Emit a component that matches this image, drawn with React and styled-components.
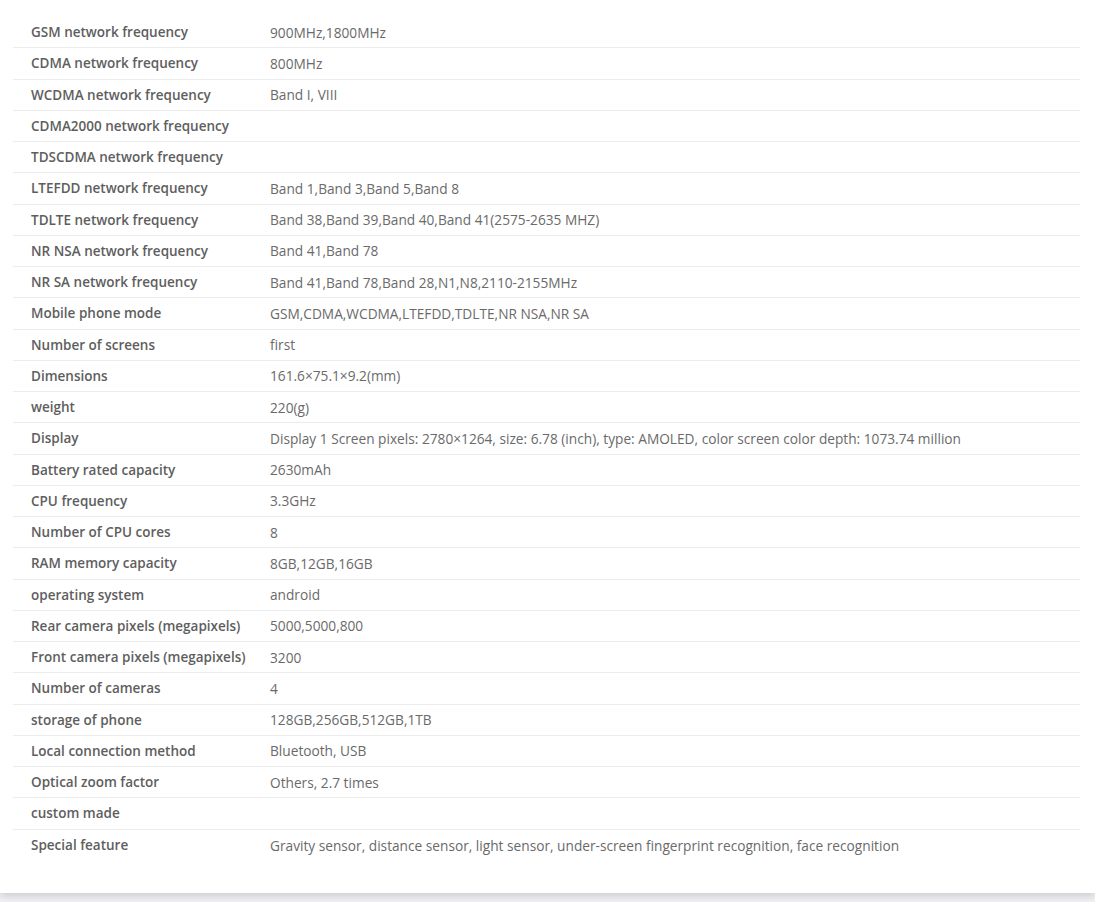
import React from 'react';
import styled, { createGlobalStyle } from 'styled-components';

const specs = [
  ['GSM network frequency', '900MHz,1800MHz'],
  ['CDMA network frequency', '800MHz'],
  ['WCDMA network frequency', 'Band I, VIII'],
  ['CDMA2000 network frequency', ''],
  ['TDSCDMA network frequency', ''],
  ['LTEFDD network frequency', 'Band 1,Band 3,Band 5,Band 8'],
  ['TDLTE network frequency', 'Band 38,Band 39,Band 40,Band 41(2575-2635 MHZ)'],
  ['NR NSA network frequency', 'Band 41,Band 78'],
  ['NR SA network frequency', 'Band 41,Band 78,Band 28,N1,N8,2110-2155MHz'],
  ['Mobile phone mode', 'GSM,CDMA,WCDMA,LTEFDD,TDLTE,NR NSA,NR SA'],
  ['Number of screens', 'first'],
  ['Dimensions', '161.6×75.1×9.2(mm)'],
  ['weight', '220(g)'],
  ['Display', 'Display 1 Screen pixels: 2780×1264, size: 6.78 (inch), type: AMOLED, color screen color depth: 1073.74 million'],
  ['Battery rated capacity', '2630mAh'],
  ['CPU frequency', '3.3GHz'],
  ['Number of CPU cores', '8'],
  ['RAM memory capacity', '8GB,12GB,16GB'],
  ['operating system', 'android'],
  ['Rear camera pixels (megapixels)', '5000,5000,800'],
  ['Front camera pixels (megapixels)', '3200'],
  ['Number of cameras', '4'],
  ['storage of phone', '128GB,256GB,512GB,1TB'],
  ['Local connection method', 'Bluetooth, USB'],
  ['Optical zoom factor', 'Others, 2.7 times'],
  ['custom made', ''],
  ['Special feature', 'Gravity sensor, distance sensor, light sensor, under-screen fingerprint recognition, face recognition'],
];

export default function App() {
  return (
    <>
      <GlobalStyle />
      <Card>
        <SpecList>
          {specs.map(([label, value]) => (
            <Row key={label}>
              <Label>{label}</Label>
              <Value>{value}</Value>
            </Row>
          ))}
        </SpecList>
      </Card>
    </>
  );
}

const GlobalStyle = createGlobalStyle`
  body {
    margin: 0;
    background: #f2f2f4;
    font-family: "Open Sans", "Noto Sans", sans-serif;
  }
`;

const Card = styled.div`
  background: #fff;
  padding: 17px 15px 32px 13px;
  box-shadow: 0 3px 8px rgba(60, 60, 80, 0.22);
  margin-bottom: 11px;
`;

const SpecList = styled.div`
  display: flex;
  flex-direction: column;
`;

const Row = styled.div`
  display: grid;
  grid-template-columns: 257px 1fr;
  height: 31.25px;
  align-items: center;
  border-bottom: 1px solid #ececec;
  box-sizing: border-box;

  &:last-child {
    border-bottom: none;
  }
`;

const Label = styled.div`
  padding-left: 18px;
  font-size: 13.5px;
  font-weight: 600;
  color: #5e5e5e;
`;

const Value = styled.div`
  font-size: 13.7px;
  color: #6a6a6a;
`;
